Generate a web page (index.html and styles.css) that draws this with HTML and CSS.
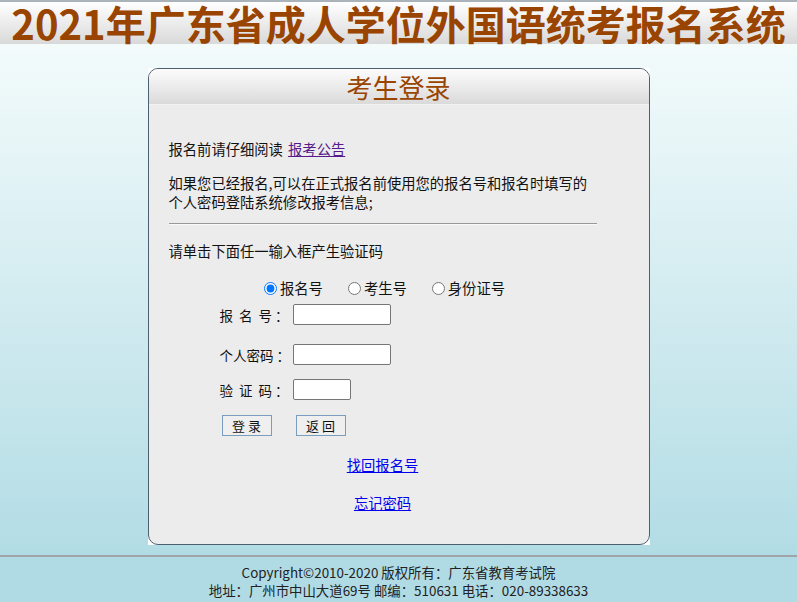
FILE: index.html
```html
<!DOCTYPE html>
<html lang="zh-CN">
<head>
  <meta charset="UTF-8" />
  <title>2021年广东省成人学位外国语统考报名系统</title>
  <link rel="stylesheet" href="styles.css">
</head>
<body>

  <div class="topbar">
    <h1>2021年广东省成人学位外国语统考报名系统</h1>
  </div>

  <div class="main">
    <div class="panel-wrap">
      <div class="panel">
        <div class="panel-head">考生登录</div>
        <div class="panel-body">
          <p class="p1">报名前请仔细阅读 <a href="#" class="visited">报考公告</a></p>
          <p class="p2">如果您已经报名,可以在正式报名前使用您的报名号和报名时填写的<br>个人密码登陆系统修改报考信息;</p>
          <hr>
          <p class="p3">请单击下面任一输入框产生验证码</p>

          <div class="radios">
            <label><input type="radio" name="kind" checked>报名号</label>
            <label><input type="radio" name="kind">考生号</label>
            <label><input type="radio" name="kind">身份证号</label>
          </div>

          <form class="login">
            <div class="row r1">
              <span class="lbl">报&nbsp;&nbsp;名&nbsp;&nbsp;号&nbsp;：</span>
              <input type="text" class="txt">
            </div>
            <div class="row r2">
              <span class="lbl">个人密码&nbsp;：</span>
              <input type="password" class="txt">
            </div>
            <div class="row r3">
              <span class="lbl">验&nbsp;&nbsp;证&nbsp;&nbsp;码&nbsp;：</span>
              <input type="text" class="txt short">
            </div>
            <div class="btns">
              <button type="button">登 录</button>
              <button type="button">返 回</button>
            </div>
          </form>

          <div class="links">
            <a href="#">找回报名号</a>
            <a href="#">忘记密码</a>
          </div>
        </div>
      </div>
    </div>
  </div>

  <div class="footer">
    <div>Copyright©2010-2020 版权所有：广东省教育考试院</div>
    <div>地址：广州市中山大道69号 邮编：510631 电话：020-89338633</div>
  </div>

</body>
</html>
```

FILE: styles.css
```css
body {
  margin: 0;
  font-family: "Noto Sans CJK SC", "Noto Sans", sans-serif;
  font-size: 14px;
  color: #111;
}
.topbar {
  height: 42px;
  border-top: 2px solid #aab2ba;
  background: linear-gradient(#ffffff, #d9d9d9);
  text-align: center;
}
.topbar h1 {
  margin: 0;
  font-size: 40px;
  line-height: 42px;
  color: #994400;
  font-weight: bold;
  white-space: nowrap;
}
.main {
  background: linear-gradient(#f3fbfb, #b2dce5);
  padding: 24px 0 10px;
}
.panel-wrap {
  width: 502px;
  margin: 0 auto;
  background: #fff;
}
.panel {
  border: 1px solid #4c6070;
  border-radius: 10px;
  background: #ececec;
  overflow: hidden;
  height: 475px;
}
.panel-head {
  height: 35px;
  border-bottom: 1px solid #f2f2f2;
  background: linear-gradient(#fcfcfc, #dadada);
  color: #994400;
  font-size: 26px;
  line-height: 36px;
  text-align: center;
}
.panel-body {
  padding: 34px 52px 0 20px;
  font-size: 14.3px;
}
.panel-body p {
  margin: 0;
  line-height: 20px;
}
.p2 {
  margin-top: 14px !important;
  line-height: 19px !important;
}
hr {
  margin: 12px 0 0;
  border: 0;
  border-top: 1px solid #999;
  border-bottom: 1px solid #fafafa;
}
.p3 {
  margin-top: 16px !important;
}
a {
  color: #0000ee;
}
a.visited {
  margin-left: 2px;
  color: #551a8b;
}
.radios {
  display: flex;
  justify-content: center;
  gap: 25px;
  margin-top: 17px;
  line-height: 20px;
  padding-left: 4px;
}
.radios label {
  display: flex;
  align-items: center;
}
.radios input {
  margin: 0 3px 0 0;
  width: 13px;
  height: 13px;
}
.login {
  margin: 0;
  padding-left: 51px;
}
.row {
  display: flex;
  align-items: center;
  height: 21px;
}
.r1 {
  margin-top: 6px;
}
.r2 {
  margin-top: 19px;
}
.r3 {
  margin-top: 14px;
}
.lbl {
  width: 73px;
  white-space: nowrap;
  font-size: 13.5px;
}
.txt {
  box-sizing: border-box;
  width: 98px;
  height: 21px;
  border: 1px solid #767676;
  border-radius: 2px;
  padding: 1px 2px;
  background: #fff;
}
.txt.short {
  width: 58px;
}
.btns {
  display: flex;
  gap: 24px;
  margin-top: 15px;
  padding-left: 2px;
}
.btns button {
  width: 50px;
  height: 21px;
  padding: 0;
  border: 1px solid #7a9cbe;
  background: #efefef;
  font-family: "Noto Sans CJK SC", sans-serif;
  font-size: 13px;
  color: #111;
}
.links {
  display: flex;
  flex-direction: column;
  align-items: center;
  gap: 18px;
  margin-top: 19px;
  line-height: 20px;
}
.footer {
  border-top: 2px solid #a0a4a8;
  background: #b0dbe5;
  text-align: center;
  font-size: 13.4px;
  line-height: 18px;
  padding-top: 6px;
  padding-bottom: 20px;
  color: #222;
}
```
